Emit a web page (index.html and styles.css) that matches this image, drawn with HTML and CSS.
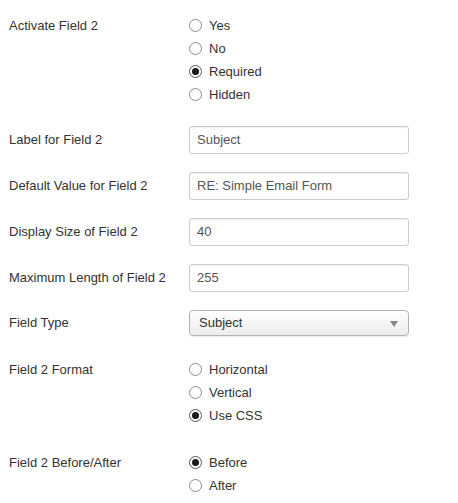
FILE: index.html
```html
<!DOCTYPE html>
<html>
<head>
<meta charset="utf-8">
<link rel="stylesheet" href="styles.css">
</head>
<body>
<div class="form">
  <div class="group radio-group">
    <div class="label">Activate Field 2</div>
    <div class="controls">
      <label class="radio"><span class="dot"></span>Yes</label>
      <label class="radio"><span class="dot"></span>No</label>
      <label class="radio"><span class="dot on"></span>Required</label>
      <label class="radio"><span class="dot"></span>Hidden</label>
    </div>
  </div>
  <div class="group input-group">
    <div class="label">Label for Field 2</div>
    <div class="controls"><div class="input">Subject</div></div>
  </div>
  <div class="group input-group">
    <div class="label">Default Value for Field 2</div>
    <div class="controls"><div class="input">RE: Simple Email Form</div></div>
  </div>
  <div class="group input-group">
    <div class="label">Display Size of Field 2</div>
    <div class="controls"><div class="input">40</div></div>
  </div>
  <div class="group input-group">
    <div class="label">Maximum Length of Field 2</div>
    <div class="controls"><div class="input">255</div></div>
  </div>
  <div class="group select-group">
    <div class="label">Field Type</div>
    <div class="controls"><div class="select">Subject<span class="caret"></span></div></div>
  </div>
  <div class="group radio-group">
    <div class="label">Field 2 Format</div>
    <div class="controls">
      <label class="radio"><span class="dot"></span>Horizontal</label>
      <label class="radio"><span class="dot"></span>Vertical</label>
      <label class="radio"><span class="dot on"></span>Use CSS</label>
    </div>
  </div>
  <div class="group radio-group">
    <div class="label">Field 2 Before/After</div>
    <div class="controls">
      <label class="radio"><span class="dot on"></span>Before</label>
      <label class="radio"><span class="dot"></span>After</label>
    </div>
  </div>
</div>
</body>
</html>
```

FILE: styles.css
```css
html, body {
  margin: 0;
  padding: 0;
  background: #fff;
}
body {
  font-family: "Liberation Sans", Arial, sans-serif;
  font-size: 13px;
  color: #333;
}
.form {
  padding: 10px 0 0 9px;
}
.group {
  display: flex;
  margin-bottom: 18px;
}
.radio-group {
  padding-top: 4px;
  padding-bottom: 2px;
}
.label {
  width: 180px;
  flex: none;
}
.radio-group .label {
  line-height: 23px;
}
.input-group .label {
  line-height: 28px;
}
.select-group .label {
  line-height: 26px;
}
.controls {
  width: 220px;
}
.radio {
  display: flex;
  align-items: center;
  height: 23px;
  line-height: 23px;
}
.dot {
  box-sizing: border-box;
  width: 13px;
  height: 13px;
  border: 1px solid #8c8c8c;
  border-radius: 50%;
  background: #fff;
  margin-right: 7px;
  display: flex;
  align-items: center;
  justify-content: center;
}
.dot.on {
  border-color: #555;
}
.dot.on::after {
  content: "";
  width: 7px;
  height: 7px;
  border-radius: 50%;
  background: #1a1a1a;
}
.input {
  box-sizing: border-box;
  height: 28px;
  line-height: 26px;
  border: 1px solid #ccc;
  border-radius: 3px;
  padding: 0 7px;
  color: #555;
  box-shadow: inset 0 1px 1px rgba(0,0,0,0.06);
}
.select {
  position: relative;
  box-sizing: border-box;
  height: 26px;
  line-height: 24px;
  border: 1px solid #b3b3b3;
  border-radius: 4px;
  padding: 0 9px;
  color: #333;
  background: linear-gradient(#ffffff, #ececec);
  box-shadow: 0 1px 1px rgba(0,0,0,0.08);
}
.caret {
  position: absolute;
  right: 10px;
  top: 10px;
  width: 0;
  height: 0;
  border-left: 4px solid transparent;
  border-right: 4px solid transparent;
  border-top: 6px solid #888;
}
```
